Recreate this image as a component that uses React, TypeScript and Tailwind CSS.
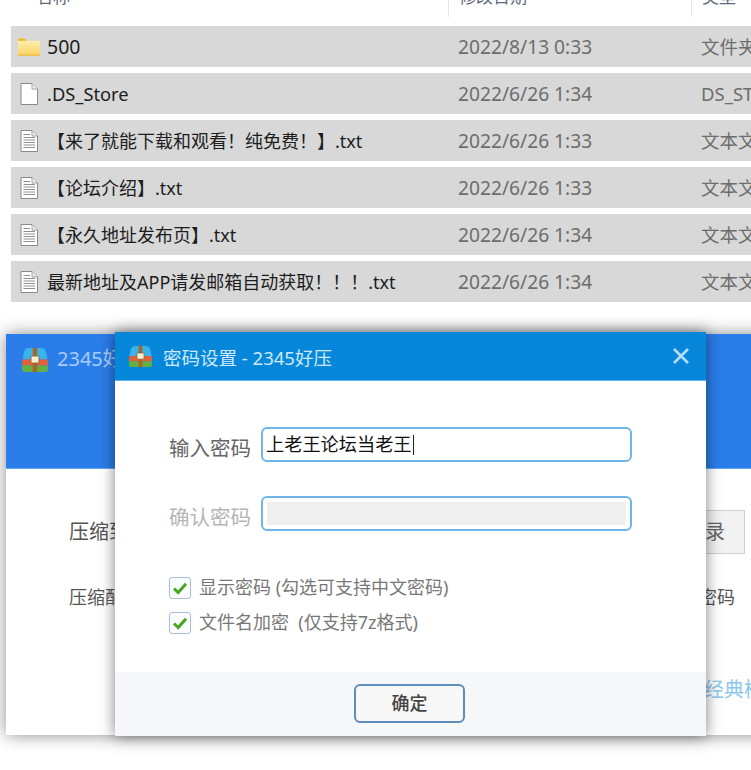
const cjk = "font-['Noto_Sans','Noto_Sans_CJK_SC',sans-serif]";

function FolderIcon() {
  return (
    <svg width="24" height="18" viewBox="0 0 24 18" className="shrink-0">
      <defs>
        <linearGradient id="fg" x1="0" y1="0" x2="0" y2="1">
          <stop offset="0" stopColor="#ffeeb0" />
          <stop offset="1" stopColor="#fbd25e" />
        </linearGradient>
      </defs>
      <path d="M1 1.5 Q1 0.5 2 0.5 H8 L10 2.5 H10 V6 H1 Z" fill="#f5b82c" />
      <rect x="1" y="2.8" width="22" height="14.7" fill="url(#fg)" />
      <rect x="1" y="16.6" width="22" height="1" fill="#e8b23a" />
    </svg>
  );
}

function FileIcon() {
  return (
    <svg width="18" height="22" viewBox="0 0 18 22" className="shrink-0">
      <path d="M1 .5 H12 L17.5 6 V21.5 H1 Z" fill="#fff" stroke="#8a8a8a" />
      <path d="M12 .5 V6 H17.5" fill="#efefef" stroke="#a0a0a0" />
    </svg>
  );
}

function TextIcon() {
  return (
    <svg width="18" height="22" viewBox="0 0 18 22" className="shrink-0">
      <path d="M1 .5 H12 L17.5 6 V21.5 H1 Z" fill="#fff" stroke="#8a8a8a" />
      <path d="M12 .5 V6 H17.5" fill="#efefef" stroke="#a0a0a0" />
      <path d="M3.5 4.5H10M3.5 7.5H15M3.5 10H15M3.5 12.5H15M3.5 15H15M3.5 17.5H15" stroke="#8f8f8f" strokeWidth="1" />
    </svg>
  );
}

function ZipIcon({ w = 28, h = 26 }: { w?: number; h?: number }) {
  return (
    <svg width={w} height={h} viewBox="0 0 28 26" className="shrink-0">
      <path d="M1.5 12.5 L3 5 Q4 1 8 1 H20 Q24 1 25 5 L26.5 12.5 Z" fill="#38b4e8" />
      <rect x="1" y="12.5" width="26" height="6" fill="#e2603a" />
      <path d="M1 18.5 H27 V22 Q27 25 24 25 H4 Q1 25 1 22 Z" fill="#62b043" />
      <rect x="11.8" y="1" width="4.4" height="24" fill="#a9662a" />
      <rect x="10" y="9" width="8" height="7" rx="0.8" fill="#f6ecd4" stroke="#8a5a22" strokeWidth="0.8" />
    </svg>
  );
}

function Check() {
  return (
    <span className="flex h-[22px] w-[22px] shrink-0 items-center justify-center rounded-[3px] border border-[#a9bcd6] bg-[#fbfcfe]">
      <svg width="16" height="14" viewBox="0 0 16 14">
        <path d="M2 7.5 L6.2 11.5 L14 2.8" fill="none" stroke="#45a81e" strokeWidth="3" />
      </svg>
    </span>
  );
}

const rows = [
  { icon: <FolderIcon />, name: "500", date: "2022/8/13 0:33", type: "文件夹", gap: "gap-[6px] pl-[6px]", size: "text-[19.5px]" },
  { icon: <FileIcon />, name: ".DS_Store", date: "2022/6/26 1:34", type: "DS_STORE", gap: "gap-[9px] pl-[9px]", size: "text-[18.3px]" },
  { icon: <TextIcon />, name: "【来了就能下载和观看！纯免费！】.txt", date: "2022/6/26 1:33", type: "文本文档", gap: "gap-[9px] pl-[9px]", size: "text-[18px]" },
  { icon: <TextIcon />, name: "【论坛介绍】.txt", date: "2022/6/26 1:33", type: "文本文档", gap: "gap-[9px] pl-[9px]", size: "text-[18px]" },
  { icon: <TextIcon />, name: "【永久地址发布页】.txt", date: "2022/6/26 1:34", type: "文本文档", gap: "gap-[9px] pl-[9px]", size: "text-[18px]" },
  { icon: <TextIcon />, name: "最新地址及APP请发邮箱自动获取！！！.txt", date: "2022/6/26 1:34", type: "文本文档", gap: "gap-[9px] pl-[9px]", size: "text-[18px]" },
];

export default function App() {
  return (
    <div className={`relative h-[770px] w-[751px] overflow-hidden bg-white ${cjk}`}>
      {/* Explorer list */}
      <div className="flex h-[17px] items-end overflow-hidden text-[17px] leading-[22px] text-[#5f6a78]">
        <div className="h-[17px] w-[448px] pl-[36px]"><div className="mt-[-14px]">名称</div></div>
        <div className="h-[17px] w-[243px] border-l border-[#e5e5e5] pl-[10px]"><div className="mt-[-14px]">修改日期</div></div>
        <div className="h-[17px] flex-1 border-l border-[#e5e5e5] pl-[10px]"><div className="mt-[-14px]">类型</div></div>
      </div>
      <div className="ml-[11px] mt-[9px] flex flex-col gap-[6px]">
        {rows.map((r) => (
          <div key={r.name} className="flex h-[41px] items-center bg-[#d8d8d8]">
            <div className={`flex w-[447px] shrink-0 items-center ${r.gap} ${r.size} text-[#1d1d1d]`}>
              {r.icon}
              <span className="whitespace-nowrap pt-[1px]">{r.name}</span>
            </div>
            <div className="w-[243px] shrink-0 pt-[1px] text-[19.2px] text-[#6d6d6d]">{r.date}</div>
            <div className="overflow-hidden whitespace-nowrap text-[18.5px] text-[#6d6d6d]">{r.type}</div>
          </div>
        ))}
      </div>

      {/* Back window */}
      <div className="absolute left-[6px] top-[334px] flex h-[401px] w-[800px] flex-col bg-white shadow-[0_0_16px_rgba(0,0,0,0.45)]">
        <div className="flex h-[135px] items-start gap-[8px] border-b border-[#5fa8f0] bg-[#2b7de9] pl-[15px] pt-[13px] text-[20px] leading-[24px] text-[#a9cdfa]">
          <ZipIcon />
          <span>2345好压</span>
        </div>
        <div className="mt-[41px] flex h-[44px] w-[739px] items-center justify-between pl-[63px] text-[20px] text-[#555]">
          <span>压缩到</span>
          <span className="flex h-[44px] w-[85px] items-center justify-end border border-[#cfcfcf] bg-[#f2f2f2] pr-[19px] text-[#666]">目录</span>
        </div>
        <div className="mt-[31px] flex h-[24px] w-[739px] items-center justify-between pl-[63px] pr-[10px] text-[18px] text-[#555]">
          <span>压缩配置</span>
          <span>加密码</span>
        </div>
        <div className="mt-[66px] h-[30px] pl-[698px] text-[20px] leading-[30px] text-[#8cc8ee]">经典模式</div>
      </div>

      {/* Modal window */}
      <div className="absolute left-[115px] top-[332px] flex h-[404px] w-[591px] flex-col bg-white shadow-[0_0_14px_rgba(0,0,0,0.5)]">
        <div className="flex h-[49px] shrink-0 items-center border-b border-[#5fb6ee] bg-[#0787da] pl-[13px] pr-[15px]">
          <ZipIcon w={25} h={23} />
          <span className="ml-[10px] mt-[3px] text-[18.5px] text-[#cfe9fb]">密码设置 - 2345好压</span>
          <svg width="20" height="20" viewBox="0 0 20 20" className="ml-auto">
            <path d="M3 3 L17 17 M17 3 L3 17" stroke="#b5def6" strokeWidth="2.6" />
          </svg>
        </div>
        <div className="flex flex-1 flex-col pl-[54px] pt-[46px]">
          <div className="flex items-start gap-[8px]">
            <span className="mt-[7px] w-[84px] whitespace-nowrap text-[20.5px] leading-[28px] text-[#666]">输入密码</span>
            <div className="flex h-[35px] w-[371px] items-center rounded-[6px] border-2 border-[#6fb6e8] pl-[3px] text-[18.2px] text-[#111]">
              上老王论坛当老王<span className="ml-[1px] h-[20px] w-px bg-[#222]" />
            </div>
          </div>
          <div className="mt-[34px] flex items-start gap-[8px]">
            <span className="mt-[7px] w-[84px] whitespace-nowrap text-[20.5px] leading-[28px] text-[#b5b5b5]">确认密码</span>
            <div className="h-[35px] w-[371px] rounded-[6px] border-2 border-[#6fb6e8] p-[4px]">
              <div className="h-full w-full bg-[#efefef]" />
            </div>
          </div>
          <div className="mt-[46px] flex h-[22px] items-center gap-[8px] text-[18px] text-[#777]">
            <Check />
            <span className="pb-[2px]">显示密码 (勾选可支持中文密码)</span>
          </div>
          <div className="mt-[13px] flex h-[22px] items-center gap-[8px] text-[18px] text-[#777]">
            <Check />
            <span className="pb-[2px]">文件名加密 &nbsp;(仅支持7z格式)</span>
          </div>
        </div>
        <div className="flex h-[64px] shrink-0 items-center bg-[#f6f7f8] pl-[239px]">
          <button className="mb-[2px] h-[39px] w-[111px] rounded-[6px] border-2 border-[#5d8dbd] bg-[#f7f7f7] text-[18px] font-medium leading-none text-[#444]">确定</button>
        </div>
      </div>
    </div>
  );
}
